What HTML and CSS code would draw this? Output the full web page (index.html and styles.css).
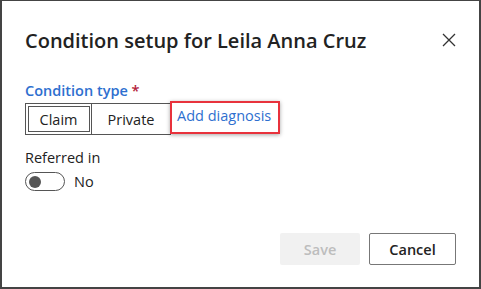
FILE: index.html
```html
<!DOCTYPE html>
<html>
<head>
	<title>Condition setup</title>
	<meta name="viewport" content="width=device-width">
	<link rel="stylesheet" href="styles.css">
</head>
<body>
	<div class="dialog">
		<header class="dialog-header">
			<h1>Condition setup for Leila Anna Cruz</h1>
			<button class="closeButton" aria-label="Close">
				<svg width="14" height="14" viewBox="0 0 14 14"><path d="M1 1 L13 13 M13 1 L1 13" stroke="#333" stroke-width="1.3" fill="none"/></svg>
			</button>
		</header>

		<div class="dialog-body">
			<label class="fieldLabel">Condition type <span class="required">*</span></label>
			<div class="typeRow">
				<div class="segmented">
					<button class="segment selected">Claim</button>
					<button class="segment">Private</button>
				</div>
				<a class="addLink" href="#">Add diagnosis</a>
			</div>

			<label class="plainLabel">Referred in</label>
			<div class="toggleRow">
				<span class="toggle"><span class="knob"></span></span>
				<span class="toggleText">No</span>
			</div>
		</div>

		<footer class="dialog-footer">
			<button class="saveButton" disabled>Save</button>
			<button class="cancelButton">Cancel</button>
		</footer>
	</div>
</body>
</html>
```

FILE: styles.css
```css
/* Основные стили */
body {
	margin: 0;
	padding: 0;
	background-color: #fff;
	font-family: "Open Sans", Arial, sans-serif;
	color: #222;
}

.dialog {
	box-sizing: border-box;
	width: 481px;
	height: 289px;
	border: 2px solid #444;
	border-top-width: 1px;
	display: flex;
	flex-direction: column;
	padding: 0 23px 0 23px;
}

/* Заголовок */
.dialog-header {
	display: flex;
	align-items: center;
	justify-content: space-between;
	padding-top: 26px;
	height: 26px;
}

.dialog-header h1 {
	margin: 0;
	font-size: 20px;
	font-weight: 600;
	color: #222;
}

.closeButton {
	background: none;
	border: none;
	padding: 0;
	width: 14px;
	height: 14px;
	cursor: pointer;
}

.closeButton svg {
	display: block;
}

.dialog-body {
	padding-top: 28px;
	flex: 1;
}

.fieldLabel {
	display: block;
	color: #2e6fcf;
	font-size: 14.5px;
	font-weight: 600;
	line-height: 20px;
}

.required {
	color: #b3203a;
}

.typeRow {
	display: flex;
	align-items: flex-start;
	margin-top: 2px;
}

.segmented {
	display: flex;
	border: 1px solid #555;
}

.segment {
	box-sizing: border-box;
	font-family: inherit;
	font-size: 14.5px;
	color: #222;
	background: #fff;
	border: none;
	height: 30px;
	width: 78px;
	padding: 0;
	cursor: pointer;
}

.segment.selected {
	width: 66px;
	outline: 1px solid #555;
	outline-offset: -3px;
	border-right: 1px solid #555;
}

.addLink {
	border: 2px solid #e8323c;
	box-shadow: 0 1px 4px rgba(0, 0, 0, 0.35);
	color: #2e6fcf;
	font-size: 14.5px;
	text-decoration: none;
	padding: 3px 7px 6px 5px;
	line-height: 20px;
	margin-top: -2px;
	margin-left: -1px;
}

.plainLabel {
	display: block;
	font-size: 14.5px;
	line-height: 20px;
	margin-top: 13px;
	color: #222;
}

.toggleRow {
	display: flex;
	align-items: center;
	margin-top: 4px;
}

.toggle {
	box-sizing: border-box;
	width: 40px;
	height: 19px;
	border: 1px solid #555;
	border-radius: 10px;
	display: flex;
	align-items: center;
	padding-left: 3px;
}

.knob {
	width: 12px;
	height: 12px;
	border-radius: 50%;
	background-color: #555;
}

.toggleText {
	font-size: 14.5px;
	margin-left: 9px;
}

/* Кнопки внизу */
.dialog-footer {
	display: flex;
	justify-content: flex-end;
	gap: 9px;
	padding-bottom: 22px;
}

.saveButton,
.cancelButton {
	font-family: inherit;
	font-size: 14.5px;
	font-weight: 600;
	height: 32px;
	border-radius: 2px;
}

.saveButton {
	width: 80px;
	background-color: #f1f1f1;
	color: #bdbdbd;
	border: none;
}

.cancelButton {
	width: 87px;
	background-color: #fff;
	color: #222;
	border: 1px solid #777;
	cursor: pointer;
}
```
